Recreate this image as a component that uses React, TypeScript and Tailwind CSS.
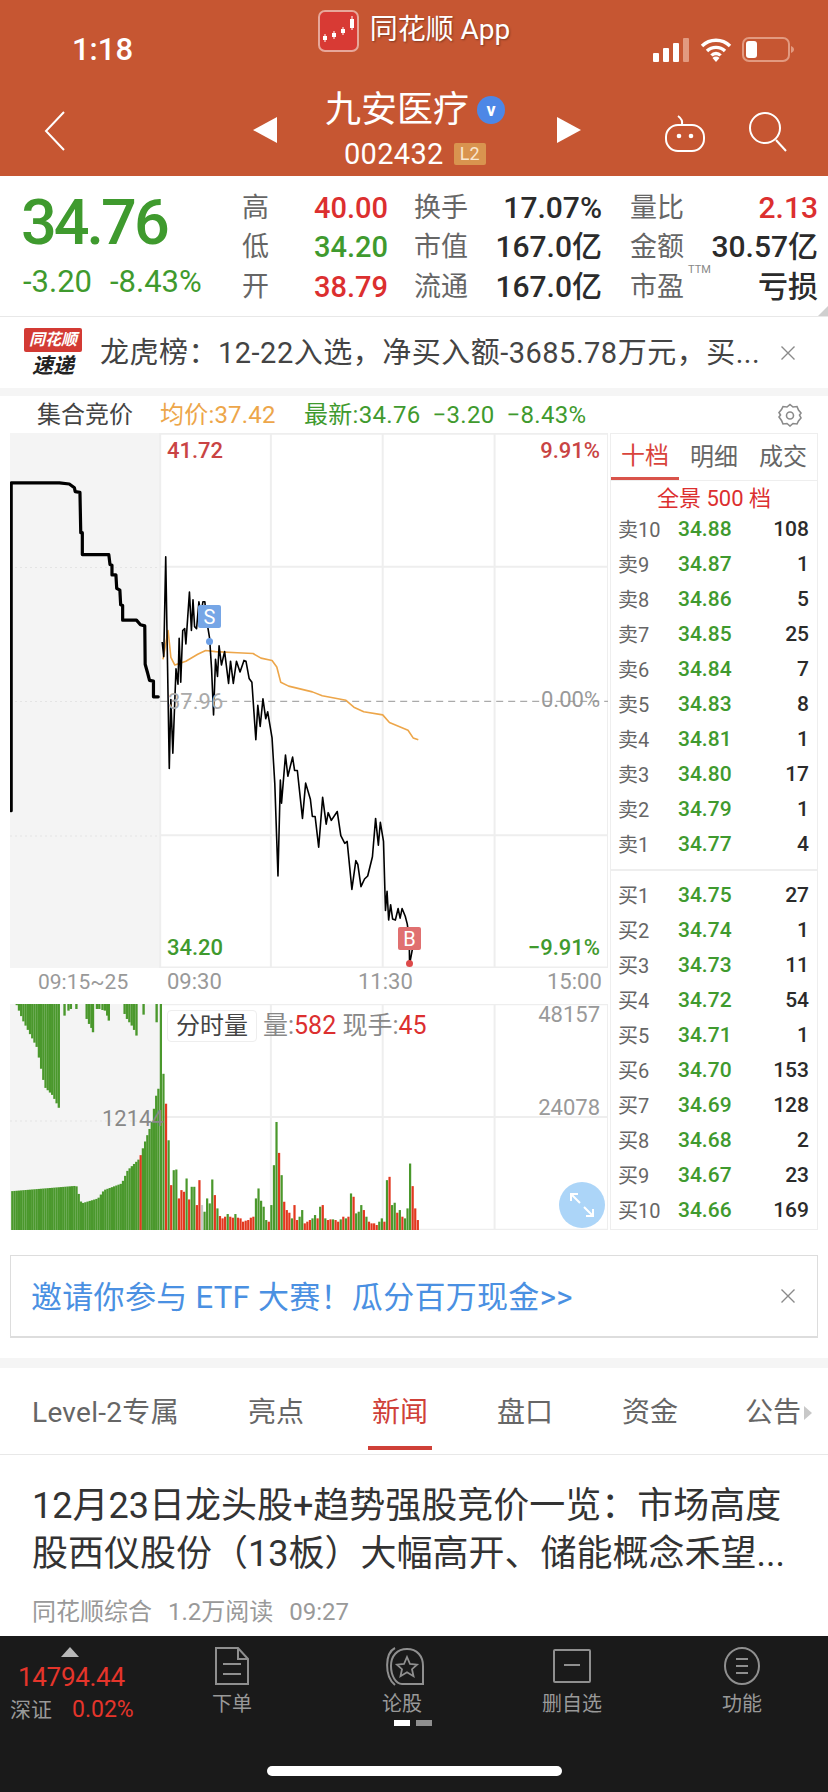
import React from 'react';

const SANS = "font-['Roboto','Noto_Sans_CJK_SC',sans-serif]";

const stats = [
  { l1: '高', v1: '40.00', c1: 'text-[#dc2f2f]', l2: '换手', v2: '17.07%', l3: '量比', v3: '2.13', c3: 'text-[#dc2f2f]' },
  { l1: '低', v1: '34.20', c1: 'text-[#3f9a2e]', l2: '市值', v2: '167.0亿', l3: '金额', v3: '30.57亿', c3: 'text-[#2b2b2b]' },
  { l1: '开', v1: '38.79', c1: 'text-[#dc2f2f]', l2: '流通', v2: '167.0亿', l3: '市盈', v3: '亏损', c3: 'text-[#2b2b2b]' },
];

const asks = [
  ['卖10', '34.88', '108'], ['卖9', '34.87', '1'], ['卖8', '34.86', '5'], ['卖7', '34.85', '25'], ['卖6', '34.84', '7'],
  ['卖5', '34.83', '8'], ['卖4', '34.81', '1'], ['卖3', '34.80', '17'], ['卖2', '34.79', '1'], ['卖1', '34.77', '4'],
];
const bids = [
  ['买1', '34.75', '27'], ['买2', '34.74', '1'], ['买3', '34.73', '11'], ['买4', '34.72', '54'], ['买5', '34.71', '1'],
  ['买6', '34.70', '153'], ['买7', '34.69', '128'], ['买8', '34.68', '2'], ['买9', '34.67', '23'], ['买10', '34.66', '169'],
];

const preLine = '28,1070 28,215 150,215 175,218 188,228 190,238 202,240 204,345 208,345 208,402 275,402 278,428 283,430 283,455 293,455 295,490 303,495 305,533 310,535 310,573 345,573 355,585 366,588 367,688 373,710 378,730 388,732 388,773 400,773';
const priceLine = '410,630 414,668 419,408 428,960 432,780 437,920 445,700 450,740 453,620 457,735 462,600 467,595 470,635 479,500 484,600 488,520 492,590 497,595 503,525 508,560 513,525 518,525 522,570 530,620 535,700 540,820 545,675 550,720 554,640 560,690 568,655 578,738 583,680 590,738 598,680 607,708 617,678 622,680 630,725 637,735 647,885 652,795 658,850 665,778 672,830 677,812 688,880 695,1000 703,1240 709,990 712,1050 722,925 728,980 740,930 745,965 752,965 765,1090 773,998 785,1040 790,1085 797,1085 806,1165 816,1035 825,1105 830,1075 838,1095 853,1072 862,1135 872,1155 878,1150 890,1275 900,1200 905,1210 913,1268 922,1248 930,1240 942,1190 950,1090 957,1160 962,1100 970,1150 975,1330 979,1280 983,1355 988,1315 993,1352 1000,1355 1007,1325 1012,1350 1017,1325 1025,1345 1030,1365 1035,1400 1036,1470 1045,1420 1058,1378';
const avgLine = '412,675 425,600 432,670 442,690 470,680 500,662 520,652 545,655 600,658 640,660 660,672 688,678 700,695 710,735 730,745 790,760 815,770 875,782 895,800 920,812 968,820 985,840 1032,860 1045,880 1058,885';

// left auction bars: [x, y] outline of the rising volume
const preVol = [[28, 603], [190, 587], [203, 640], [245, 625], [260, 600], [305, 580], [320, 540], [350, 505], [365, 450], [380, 400], [395, 295]];
const hanging = [[38, 40], [55, 90], [90, 170], [110, 290], [130, 315], [148, 358]];
const hangingExtra = [[160, 75], [170, 60], [176, 55], [190, 55], [216, 85], [222, 100], [228, 112], [232, 125], [242, 55], [248, 55], [256, 58], [262, 60], [268, 75], [272, 90], [312, 70], [318, 85], [324, 95], [330, 105], [336, 118], [342, 135], [360, 72], [393, 95]];
const lerp = (pts: number[][], x: number) => {
  for (let i = 1; i < pts.length; i++) {
    if (x <= pts[i][0]) {
      const [x0, y0] = pts[i - 1];
      const [x1, y1] = pts[i];
      return y0 + ((y1 - y0) * (x - x0)) / (x1 - x0);
    }
  }
  return pts[pts.length - 1][1];
};
const preXs = Array.from({ length: 67 }, (_, i) => 28 + i * 5.6);
const rightBars = 'g40 g250 r340 g450 r585 g540 g538 r625 r600 r605 g565 r628 g590 g590 r645 r570 h645 g665 g625 g640 g568 r615 g655 r678 r685 r680 g672 r680 r683 g672 r683 r685 r695 r692 r690 r683 r680 g625 g595 g632 g650 g690 r695 g645 g525 g395 r488 g555 r635 r660 r668 g685 r645 r690 g680 g660 r700 r695 r690 g685 g675 r685 g650 r645 g685 r690 r688 g688 r690 r695 g688 r680 g685 r680 g610 r620 g670 g665 g645 r660 g680 r695 r700 r700 r705 g695 g685 r695 g570 r560 g645 g638 r668 g660 r680 g685 g655 g520 r588 r655 r690'.split(' ');
const barColor: Record<string, string> = { g: '#4a982c', r: '#e2381f', h: '#c9c9c9' };

const GridLines = ({ h }: { h: number[] }) => (
  <>
    {[405, 685, 968, 1251, 1538].map((x) => (
      <line key={x} x1={x} x2={x} y1="0" y2="2000" stroke="#eeeeee" strokeWidth="2" vectorEffect="non-scaling-stroke" />
    ))}
    {h.map((y) => (
      <line key={y} x1="405" x2="1538" y1={y} y2={y} stroke="#eeeeee" strokeWidth="2" vectorEffect="non-scaling-stroke" />
    ))}
  </>
);

const PriceChart = () => (
  <svg viewBox="25 85 1513 1395" preserveAspectRatio="none" className="absolute inset-0 h-full w-full">
    <rect x="25" y="85" width="380" height="1395" fill="#f4f4f4" />
    <GridLines h={[87, 434, 1134, 1479]} />
    <line x1="25" x2="405" y1="436" y2="436" stroke="#e4e4e4" strokeDasharray="2 3" vectorEffect="non-scaling-stroke" />
    <line x1="25" x2="405" y1="785" y2="785" stroke="#e4e4e4" strokeDasharray="2 3" vectorEffect="non-scaling-stroke" />
    <line x1="25" x2="405" y1="1136" y2="1136" stroke="#e4e4e4" strokeDasharray="2 3" vectorEffect="non-scaling-stroke" />
    <line x1="405" x2="1538" y1="785" y2="785" stroke="#aaaaaa" strokeWidth="1.2" strokeDasharray="7 5" vectorEffect="non-scaling-stroke" />
    <polyline points={preLine} fill="none" stroke="#000" strokeWidth="3.2" strokeLinejoin="round" strokeLinecap="round" vectorEffect="non-scaling-stroke" />
    <polyline points={avgLine} fill="none" stroke="#eda64a" strokeWidth="1.6" strokeLinejoin="round" vectorEffect="non-scaling-stroke" />
    <polyline points={priceLine} fill="none" stroke="#000" strokeWidth="1.6" strokeLinejoin="round" vectorEffect="non-scaling-stroke" />
  </svg>
);

const VolumeChart = () => (
  <svg viewBox="25 40 1513 680" preserveAspectRatio="none" className="absolute inset-0 h-full w-full">
    <rect x="25" y="40" width="380" height="680" fill="#f4f4f4" />
    <GridLines h={[41, 380, 719]} />
    <line x1="25" x2="405" y1="392" y2="392" stroke="#e4e4e4" strokeDasharray="2 3" vectorEffect="non-scaling-stroke" />
    {preXs.map((x) => {
      const top = lerp(preVol, x);
      return <rect key={x} x={x} y={top} width="5.8" height={720 - top} fill={x > 352 && x < 358 ? barColor.r : barColor.g} />;
    })}
    {preXs
      .filter((x) => x >= 38 && x <= 150)
      .map((x) => (
        <rect key={`h${x}`} x={x} y="40" width="5.8" height={lerp(hanging, x) - 40} fill={barColor.g} />
      ))}
    {hangingExtra.map(([x, y]) => (
      <rect key={`e${x}`} x={x} y="40" width="6" height={y - 40} fill={barColor.g} />
    ))}
    {rightBars.map((b, i) => {
      const top = Number(b.slice(1));
      return <rect key={i} x={404 + (i * 650) / (rightBars.length - 1)} y={top} width="5.6" height={720 - top} fill={barColor[b[0]]} />;
    })}
  </svg>
);

const BookRow = ({ row }: { row: string[] }) => (
  <div className="flex h-[35px] items-center pl-[7px] pr-[8px]">
    <span className="w-[60px] text-[20px] text-[#666666]">{row[0]}</span>
    <span className="w-[60px] text-[21px] font-medium text-[#3f9a2e]">{row[1]}</span>
    <span className="flex-1 text-right text-[21px] font-medium text-[#2b2b2b]">{row[2]}</span>
  </div>
);

const NavIcon = ({ label, children }: { label: string; children: React.ReactNode }) => (
  <div className="flex w-[170px] flex-col items-center">
    <div className="flex h-[44px] items-center justify-center">{children}</div>
    <span className="mt-[3px] text-[20px] leading-[26px] text-[#999999]">{label}</span>
  </div>
);

const CloseX = () => (
  <svg width="16" height="16" viewBox="0 0 16 16" className="shrink-0">
    <path d="M1.5 1.5 14.5 14.5M14.5 1.5 1.5 14.5" stroke="#8a8a8a" strokeWidth="1.4" />
  </svg>
);

export default function App() {
  return (
    <div className={`flex h-[1792px] w-[828px] flex-col overflow-hidden bg-white ${SANS}`}>
      {/* header */}
      <header className="h-[176px] shrink-0 bg-[#c65632] text-white">
        <div className="grid h-[88px] grid-cols-[1fr_auto_1fr]">
          <span className="pl-[72px] pt-[31px] text-[31px] font-medium leading-[38px]">1:18</span>
          <div className="flex items-start gap-[11px] pt-[10px]">
            <svg width="41" height="42" viewBox="0 0 41 42" className="shrink-0">
              <rect x="1" y="1" width="39" height="40" rx="6" fill="#d83a34" stroke="#e7a79a" strokeWidth="2" />
              <path d="M7 24v8M16 21v8M25 17v8M34 6v14" stroke="#fff" strokeWidth="1" />
              <rect x="5" y="26" width="4" height="4" fill="#fff" />
              <rect x="14" y="23" width="4" height="4" fill="#fff" />
              <rect x="23" y="19" width="4" height="4" fill="#fff" />
              <rect x="32" y="9" width="4" height="9" fill="#fff" />
            </svg>
            <span className="mt-[2px] text-[28px] leading-[36px] [text-shadow:1px_1px_2px_rgba(0,0,0,0.35)]">同花顺 App</span>
          </div>
          <div className="flex items-start justify-end gap-[10px] pr-[34px] pt-[37px]">
            <svg width="37" height="25" viewBox="0 0 37 25" className="shrink-0">
              <rect x="0" y="16" width="6" height="9" rx="1" fill="#fff" />
              <rect x="10" y="11" width="6" height="14" rx="1" fill="#fff" />
              <rect x="20" y="6" width="6" height="19" rx="1" fill="#fff" />
              <rect x="30" y="1" width="6" height="24" rx="1" fill="#e29a80" />
            </svg>
            <svg width="32" height="25" viewBox="0 0 32 25" className="shrink-0">
              <path d="M2 9a20 20 0 0 1 28 0M7 14a13 13 0 0 1 18 0M11.5 18.5a6 6 0 0 1 9 0" fill="none" stroke="#fff" strokeWidth="3.4" />
              <path d="M16 25l-3.5-4a5 5 0 0 1 7 0z" fill="#fff" />
            </svg>
            <svg width="52" height="25" viewBox="0 0 52 25" className="shrink-0">
              <rect x="1" y="1" width="46" height="23" rx="6" fill="none" stroke="#e29a80" strokeWidth="2" />
              <rect x="4" y="4" width="11" height="17" rx="3" fill="#fff" />
              <path d="M49 9c2 1 3 2 3 3.500s-1 2.500-3 3.500z" fill="#e29a80" />
            </svg>
          </div>
        </div>
        <div className="flex h-[88px] items-start">
          <svg width="22" height="40" viewBox="0 0 22 40" className="ml-[44px] mt-[23px] shrink-0">
            <path d="M20 1 2 20l18 19" fill="none" stroke="#fff" strokeWidth="2" />
          </svg>
          <svg width="24" height="26" viewBox="0 0 24 26" className="ml-[187px] mt-[29px] shrink-0">
            <path d="M24 0v26L0 13z" fill="#fff" />
          </svg>
          <div className="ml-[48px] flex w-[232px] flex-col">
            <div className="flex items-center">
              <span className="text-[36px] leading-[44px]">九安医疗</span>
              <span className="ml-[8px] flex h-[28px] w-[28px] items-center justify-center rounded-full bg-[#4d87e6] text-[18px] font-bold leading-none">v</span>
            </div>
            <div className="ml-[19px] mt-[8px] flex items-center gap-[10px]">
              <span className="text-[29px] leading-[28px] tracking-[0.3px]">002432</span>
              <span className="flex h-[22px] w-[32px] items-center justify-center rounded-[2px] bg-[#d9944f] text-[18px] leading-none text-[#f9e7cf]">L2</span>
            </div>
          </div>
          <svg width="24" height="26" viewBox="0 0 24 26" className="mt-[29px] shrink-0">
            <path d="M0 0v26l24-13z" fill="#fff" />
          </svg>
          <svg width="42" height="38" viewBox="0 0 42 38" className="ml-[83px] mt-[26px] shrink-0">
            <rect x="2" y="11" width="38" height="26" rx="12" fill="none" stroke="#fff" strokeWidth="2" />
            <path d="M18 11C19 6 17 4 14 2" fill="none" stroke="#fff" strokeWidth="2" />
            <circle cx="15" cy="22" r="2.300" fill="#fff" />
            <circle cx="27" cy="22" r="2.300" fill="#fff" />
          </svg>
          <svg width="38" height="40" viewBox="0 0 38 40" className="ml-[43px] mt-[24px] shrink-0">
            <ellipse cx="16" cy="16" rx="15" ry="15" fill="none" stroke="#fff" strokeWidth="2" />
            <path d="M27 28l10 11" stroke="#fff" strokeWidth="2" />
          </svg>
        </div>
      </header>

      {/* quote */}
      <section className="relative flex h-[141px] shrink-0 border-b border-[#e8e8e8]">
        <div className="w-[242px] shrink-0 pl-[21px] pt-[11px]">
          <div className="text-[63px] font-medium leading-[72px] tracking-[-3px] text-[#3f9a2e]">34.76</div>
          <div className="ml-[2px] mt-[6px] flex gap-[18px] whitespace-nowrap text-[31px] leading-[34px] text-[#3f9a2e]">
            <span>-3.20</span>
            <span>-8.43%</span>
          </div>
        </div>
        <div className="flex-1 pt-[12px]">
          {stats.map((s) => (
            <div key={s.l1} className="grid h-[39.5px] grid-cols-[72px_71px_83px_134px_82px_134px] items-center text-[27px] leading-[36px] text-[#666666]">
              <span>{s.l1}</span>
              <span className={`whitespace-nowrap text-right text-[29px] font-medium ${s.c1}`}>{s.v1}</span>
              <span className="pl-[29px]">{s.l2}</span>
              <span className="whitespace-nowrap text-right text-[30px] font-medium text-[#2b2b2b]">{s.v2}</span>
              <span className="relative pl-[28px]">
                {s.l3}
                {s.l3 === '市盈' && <span className="absolute left-[86px] top-[-5px] text-[11px] leading-[12px] text-[#888888]">TTM</span>}
              </span>
              <span className={`whitespace-nowrap text-right text-[30px] font-medium ${s.c3}`}>{s.v3}</span>
            </div>
          ))}
        </div>
        <div className="absolute bottom-0 right-0 h-0 w-0 border-b-[10px] border-l-[10px] border-b-[#cfcfcf] border-l-transparent" />
      </section>

      {/* notice */}
      <section className="flex h-[71px] shrink-0 items-center">
        <div className="ml-[24px] flex w-[58px] shrink-0 flex-col items-center">
          <span className="flex h-[24px] w-[58px] items-center justify-center rounded-[2px] bg-[#d33a34] text-[16px] font-bold italic leading-none text-white">同花顺</span>
          <span className="mt-[2px] text-[21px] font-bold italic leading-[24px] text-[#222222]">速递</span>
        </div>
        <span className="ml-[18px] w-[680px] whitespace-nowrap text-[29px] leading-[36px] tracking-[0.5px] text-[#444444]">龙虎榜：12-22入选，净买入额-3685.78万元，买...</span>
        <CloseX />
      </section>
      <div className="h-[8px] shrink-0 bg-[#f5f5f5]" />

      {/* chart header */}
      <div className="flex h-[37px] shrink-0 items-center text-[24px] leading-[30px]">
        <span className="ml-[37px] w-[123px] text-[24px] text-[#444444]">集合竞价</span>
        <span className="w-[144px] whitespace-nowrap tracking-[0.2px] text-[#eda64a]">均价:37.42</span>
        <span className="flex w-[474px] gap-[12px] whitespace-nowrap tracking-[0.3px] text-[#3f9a2e]">
          <span>最新:34.76</span>
          <span>−3.20</span>
          <span>−8.43%</span>
        </span>
        <svg width="24" height="24" viewBox="0 0 24 24" className="shrink-0" fill="none" stroke="#8a8a8a" strokeWidth="1.6">
          <path d="M12 1.500l3 2.500 4-.5 1.500 3.500 2.500 3-1.500 2 1.500 3-2.500 3-1.500 3-4-.5-3 2.500-3-2.500-4 .5-1.500-3.500L1 14l1.500-2L1 9.500l2.500-3L5 3.500l4 .5z" />
          <circle cx="12" cy="12.500" r="3.500" />
        </svg>
      </div>

      {/* chart + order book */}
      <section className="flex h-[797px] shrink-0 pl-[10px]">
        <div className="flex w-[598px] shrink-0 flex-col">
          <div className="relative h-[535px] shrink-0 text-[22px] font-medium leading-[26px]">
            <PriceChart />
            <span className="absolute left-[157px] top-[5px] text-[#c94444]">41.72</span>
            <span className="absolute right-[8px] top-[5px] text-[#c94444]">9.91%</span>
            <span className="absolute left-[158px] top-[256px] font-normal text-[#aaaaaa]">37.96</span>
            <span className="absolute right-[8px] top-[254px] font-normal text-[#999999]">0.00%</span>
            <span className="absolute left-[157px] top-[502px] text-[#3f9a2e]">34.20</span>
            <span className="absolute right-[8px] top-[502px] text-[#3f9a2e]">−9.91%</span>
            <span className="absolute left-[188px] top-[172px] flex h-[23px] w-[23px] items-center justify-center rounded-[2px] bg-[#76a6e6] text-[20px] font-normal text-white">S</span>
            <span className="absolute left-[196px] top-[205px] h-[7px] w-[7px] rounded-full bg-[#6c9fe6]" />
            <span className="absolute left-[388px] top-[494px] flex h-[23px] w-[23px] items-center justify-center rounded-[2px] bg-[#e07070] text-[20px] font-normal text-white">B</span>
            <span className="absolute left-[396px] top-[527px] h-[7px] w-[7px] rounded-full bg-[#dd4a4a]" />
          </div>
          <div className="flex h-[36px] shrink-0 items-start pt-[1px] text-[22px] leading-[26px] text-[#999999]">
            <span className="ml-[28px] w-[129px] text-[21px]">09:15~25</span>
            <span className="w-[191px]">09:30</span>
            <span className="w-[189px]">11:30</span>
            <span>15:00</span>
          </div>
          <div className="relative h-[226px] shrink-0">
            <VolumeChart />
            <span className="absolute left-[157px] top-[6px] flex h-[32px] w-[90px] items-center justify-center rounded-[4px] border border-[#eeeeee] bg-white text-[24px] text-[#444444]">分时量</span>
            <span className="absolute left-[253px] top-[8px] whitespace-nowrap text-[25px] leading-[28px] text-[#888888]">
              量:<span className="text-[#dc2f2f]">582</span> 现手:<span className="text-[#dc2f2f]">45</span>
            </span>
            <span className="absolute right-[8px] top-[-2px] text-[22px] leading-[26px] text-[#999999]">48157</span>
            <span className="absolute right-[8px] top-[91px] text-[22px] leading-[26px] text-[#999999]">24078</span>
            <span className="absolute left-[92px] top-[102px] text-[22px] leading-[26px] text-[#888888]">12144</span>
            <span className="absolute left-[549px] top-[178px] flex h-[46px] w-[46px] items-center justify-center rounded-full bg-[#acd5f8]">
              <svg width="26" height="26" viewBox="0 0 26 26" fill="none" stroke="#fff" strokeWidth="2">
                <path d="M2 9V2h7M2 2l9 9M24 17v7h-7M24 24l-9-9" />
              </svg>
            </span>
          </div>
        </div>
        <aside className="ml-[2px] w-[208px] shrink-0 border border-[#eeeeee]">
          <div className="flex h-[47px] border-b border-[#eeeeee] text-[24px] text-[#666666]">
            <span className="flex w-[68px] items-center justify-center border-b-[3px] border-[#d9534a] text-[#d9443c]">十档</span>
            <span className="flex w-[70px] items-center justify-center">明细</span>
            <span className="flex flex-1 items-center justify-center">成交</span>
          </div>
          <div className="flex h-[31px] items-center justify-center pt-[5px] text-[22px] leading-none text-[#dc2f2f]">全景 500 档</div>
          {asks.map((r) => (
            <BookRow key={r[0]} row={r} />
          ))}
          <div className="mb-[7px] mt-[7px] h-[2px] bg-[#eeeeee]" />
          {bids.map((r) => (
            <BookRow key={r[0]} row={r} />
          ))}
        </aside>
      </section>

      {/* ad */}
      <section className="mx-[10px] mt-[25px] flex h-[83px] shrink-0 items-center justify-between border border-b-2 border-[#dddddd] pl-[20px] pr-[21px]">
        <span className="whitespace-nowrap pt-[3px] text-[31px] leading-[40px] tracking-[0.3px] text-[#4a90e2]">邀请你参与 ETF 大赛！瓜分百万现金&gt;&gt;</span>
        <CloseX />
      </section>
      <div className="mt-[20px] h-[10px] shrink-0 bg-[#f5f5f5]" />

      {/* tabs */}
      <nav className="relative flex h-[87px] shrink-0 items-center border-b border-[#e8e8e8] pt-[3px] text-[28px] leading-[36px] text-[#666666]">
        <span className="ml-[32px] w-[216px] whitespace-nowrap tracking-[0.3px]">Level-2专属</span>
        <span className="w-[124px]">亮点</span>
        <span className="relative w-[125px] text-[#cf4038]">
          新闻
          <span className="absolute left-[-4px] top-[51px] h-[4px] w-[64px] bg-[#cf4038]" />
        </span>
        <span className="w-[125px]">盘口</span>
        <span className="w-[123px]">资金</span>
        <span>公告</span>
        <span className="ml-[3px] h-0 w-0 border-y-[7px] border-l-[8px] border-y-transparent border-l-[#c8c8c8]" />
      </nav>

      {/* news */}
      <article className="h-[181px] shrink-0 pl-[32px] pt-[27px]">
        <h2 className="whitespace-nowrap text-[36px] font-normal leading-[48px] text-[#333333]">12月23日龙头股+趋势强股竞价一览：市场高度</h2>
        <h2 className="whitespace-nowrap text-[36px] font-normal leading-[48px] text-[#333333]">股西仪股份（13板）大幅高开、储能概念禾望...</h2>
        <div className="mt-[19px] flex gap-[16px] text-[24px] leading-[30px] text-[#999999]">
          <span>同花顺综合</span>
          <span>1.2万阅读</span>
          <span>09:27</span>
        </div>
      </article>

      {/* bottom bar */}
      <footer className="relative flex-1 bg-[#1a1a1a]">
        <div className="flex pt-[11px]">
          <div className="w-[147px] shrink-0 pl-[10px]">
            <div className="ml-[51px] h-0 w-0 border-x-[9px] border-b-[10px] border-x-transparent border-b-[#b8b8b8]" />
            <div className="ml-[8px] mt-[5px] text-[26px] leading-[30px] tracking-[-0.3px] text-[#e5352b]">14794.44</div>
            <div className="mt-[4px] flex items-center gap-[20px] whitespace-nowrap">
              <span className="text-[21px] leading-[28px] text-[#999999]">深证</span>
              <span className="text-[23px] leading-[28px] text-[#e5352b]">0.02%</span>
            </div>
          </div>
          <div className="-mt-[3px] flex">
            <NavIcon label="下单">
              <svg width="36" height="38" viewBox="0 0 36 38" fill="none" stroke="#8f8f8f" strokeWidth="2">
                <path d="M2 1h22l10 11v25H2zM24 1v11h10M9 17h18M9 27h18" />
              </svg>
            </NavIcon>
            <NavIcon label="论股">
              <svg width="42" height="40" viewBox="0 0 42 40" fill="none" stroke="#8f8f8f" strokeWidth="2" className="ml-[2px]">
                <path d="M13 2C3 7 2 30 13 39M9 20C9 10 15 3 25 3s16 7 16 17v18H20C14 38 9 30 9 20z" />
                <path d="m25 11 3 7 7 .6-5 4.600 1.500 7-6.500-4-6.500 4 1.500-7-5-4.600 7-.6z" strokeWidth="1.800" />
              </svg>
            </NavIcon>
            <NavIcon label="删自选">
              <svg width="38" height="34" viewBox="0 0 38 34" fill="none" stroke="#8f8f8f" strokeWidth="2">
                <rect x="1" y="1" width="36" height="32" rx="1" />
                <path d="M11 16h16" />
              </svg>
            </NavIcon>
            <NavIcon label="功能">
              <svg width="36" height="38" viewBox="0 0 36 38" fill="none" stroke="#8f8f8f" strokeWidth="2">
                <ellipse cx="18" cy="19" rx="17" ry="18" />
                <path d="M12 12h12M12 19h12M12 26h12" />
              </svg>
            </NavIcon>
          </div>
        </div>
        <span className="absolute left-[394px] top-[84px] h-[6px] w-[16px] bg-white" />
        <span className="absolute left-[416px] top-[84px] h-[6px] w-[16px] bg-[#8f8f8f]" />
        <span className="absolute left-[267px] top-[130px] h-[10px] w-[295px] rounded-full bg-white" />
      </footer>
    </div>
  );
}
